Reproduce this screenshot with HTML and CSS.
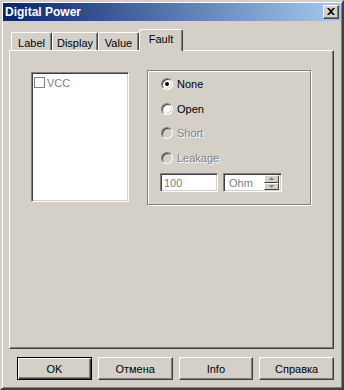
FILE: index.html
```html
<!DOCTYPE html>
<html>
<head>
<meta charset="utf-8">
<link rel="stylesheet" href="styles.css">
</head>
<body>
<div class="window">
  <div class="titlebar">
    <span class="title">Digital Power</span>
    <div class="close">
      <svg width="8" height="7" viewBox="0 0 8 7"><path d="M0 0h2l2 2 2-2h2L5 3.5 8 7H6L4 5 2 7H0l3-3.5z" fill="#000"/></svg>
    </div>
  </div>
  <div class="body">
    <div class="tabs">
      <div class="tab t-label">Label</div>
      <div class="tab t-display">Display</div>
      <div class="tab t-value">Value</div>
      <div class="tab active t-fault">Fault</div>
    </div>
    <div class="panel">
      <div class="listbox">
        <div class="item"><span class="check"></span><span class="vcc">VCC</span></div>
      </div>
      <div class="group">
        <div class="row r1"><span class="radio checked"></span><span class="lbl">None</span></div>
        <div class="row r2"><span class="radio"></span><span class="lbl">Open</span></div>
        <div class="row r3"><span class="radio disabled"></span><span class="lbl dis">Short</span></div>
        <div class="row r4"><span class="radio disabled"></span><span class="lbl dis">Leakage</span></div>
        <div class="fields">
          <div class="field f1">100</div>
          <div class="field f2"><span>Ohm</span>
            <div class="spin">
              <div class="sb"><svg width="5" height="3" viewBox="0 0 5 3"><path d="M2.5 0L5 3H0z" fill="#808080"/></svg></div>
              <div class="sb"><svg width="5" height="3" viewBox="0 0 5 3"><path d="M0 0h5L2.5 3z" fill="#808080"/></svg></div>
            </div>
          </div>
        </div>
      </div>
    </div>
    <div class="buttons">
      <div class="btn default"><span>OK</span></div>
      <div class="btn"><span>Отмена</span></div>
      <div class="btn"><span>Info</span></div>
      <div class="btn"><span>Справка</span></div>
    </div>
  </div>
</div>
</body>
</html>
```
FILE: styles.css
```css
html, body {
  margin: 0;
  padding: 0;
  background: #d4d0c8;
}
body {
  font-family: "Liberation Sans", Arial, sans-serif;
  font-size: 11px;
  color: #000;
}
.window {
  box-sizing: border-box;
  width: 344px;
  height: 390px;
  background: #d4d0c8;
  border: 2px solid;
  border-color: #d4d0c8 #404040 #404040 #d4d0c8;
  box-shadow: inset 1px 1px #fff, inset -1px -1px #808080;
  padding: 1px;
}
.titlebar {
  height: 18px;
  background: linear-gradient(to right, #0a246a, #a6caf0);
  display: flex;
  align-items: center;
  justify-content: space-between;
  padding: 0 2px 0 2px;
}
.title {
  color: #fff;
  font-weight: bold;
  font-family: "Liberation Sans", Arial, sans-serif;
  font-size: 12px;
}
.close {
  box-sizing: border-box;
  width: 16px;
  height: 14px;
  background: #d4d0c8;
  border: 1px solid;
  border-color: #fff #404040 #404040 #fff;
  box-shadow: inset -1px -1px #808080;
  display: flex;
  align-items: center;
  justify-content: center;
  padding: 0 1px 1px 0;
}
.body {
  padding: 8px 7px 0 6px;
}
.tabs {
  display: flex;
  align-items: flex-end;
  height: 21px;
  padding-left: 2px;
}
.tab {
  box-sizing: border-box;
  height: 18px;
  border: 1px solid #fff;
  border-right: 1px solid #404040;
  border-bottom: none;
  box-shadow: inset -1px 0 #808080;
  border-radius: 2px 2px 0 0;
  display: flex;
  align-items: center;
  justify-content: center;
  padding-top: 2px;
}
.t-label { width: 41px; }
.t-display { width: 46px; }
.t-value { width: 41px; }
.t-fault { width: 44px; }
.tab.active {
  height: 22px;
  margin-bottom: -1px;
  background: #d4d0c8;
  position: relative;
  z-index: 1;
  padding-top: 0;
  padding-bottom: 3px;
}
.panel {
  box-sizing: border-box;
  width: 325px;
  height: 299px;
  border: 1px solid;
  border-color: #fff #404040 #404040 #fff;
  box-shadow: inset -1px -1px #808080;
  display: flex;
  align-items: flex-start;
  padding: 19px 0 0 21px;
}
.listbox {
  box-sizing: border-box;
  width: 98px;
  height: 130px;
  margin-top: 2px;
  background: #fff;
  border: 1px solid;
  border-color: #808080 #fff #fff #808080;
  box-shadow: inset 1px 1px #404040, inset -1px -1px #d4d0c8;
  padding: 3px 0 0 2px;
}
.item {
  display: flex;
  align-items: center;
  height: 13px;
}
.check {
  box-sizing: border-box;
  width: 11px;
  height: 11px;
  border: 1px solid #808080;
  background: #fff;
  margin-right: 2px;
}
.vcc { color: #808080; }
.group {
  box-sizing: border-box;
  width: 164px;
  height: 135px;
  margin-left: 18px;
  border: 1px solid #808080;
  box-shadow: inset 1px 1px #fff, 1px 1px #fff;
  padding: 1px 0 0 12px;
}
.row {
  display: flex;
  align-items: center;
  height: 24px;
}
.r2, .r4 { margin-top: 1px; }
.radio {
  box-sizing: border-box;
  width: 12px;
  height: 12px;
  border-radius: 50%;
  border: 1px solid;
  border-color: #808080 #fff #fff #808080;
  box-shadow: inset 1px 1px #404040, inset -1px -1px #d4d0c8;
  background: #fff;
  margin-left: 1px;
  margin-right: 4px;
  display: flex;
  align-items: center;
  justify-content: center;
}
.radio.disabled { background: #d4d0c8; }
.radio.checked::after {
  content: "";
  width: 4px;
  height: 4px;
  border-radius: 50%;
  background: #000;
}
.lbl.dis {
  color: #808080;
  text-shadow: 1px 1px #fff;
}
.fields {
  display: flex;
  margin-top: 3px;
}
.field {
  box-sizing: border-box;
  height: 19px;
  background: #fff;
  border: 1px solid;
  border-color: #808080 #fff #fff #808080;
  box-shadow: inset 1px 1px #404040, inset -1px -1px #d4d0c8;
  color: #808080;
  display: flex;
  align-items: center;
  padding-left: 3px;
}
.f1 { width: 58px; }
.f2 {
  width: 59px;
  margin-left: 5px;
  justify-content: space-between;
  padding: 2px 2px 2px 5px;
}
.spin {
  display: flex;
  flex-direction: column;
  width: 15px;
  height: 15px;
}
.sb {
  box-sizing: border-box;
  height: 7.5px;
  flex: 1;
  background: #d4d0c8;
  border: 1px solid;
  border-color: #fff #404040 #404040 #fff;
  display: flex;
  align-items: center;
  justify-content: center;
}
.buttons {
  display: flex;
  gap: 6px;
  margin-top: 8px;
  padding-left: 8px;
}
.btn {
  box-sizing: border-box;
  width: 75px;
  height: 23px;
  border: 1px solid;
  border-color: #fff #404040 #404040 #fff;
  box-shadow: inset -1px -1px #808080;
  display: flex;
  align-items: center;
  justify-content: center;
}
.btn.default {
  border: 1px solid #000;
  box-shadow: inset 1px 1px #fff, inset -1px -1px #404040, inset -2px -2px #808080;
}
```
